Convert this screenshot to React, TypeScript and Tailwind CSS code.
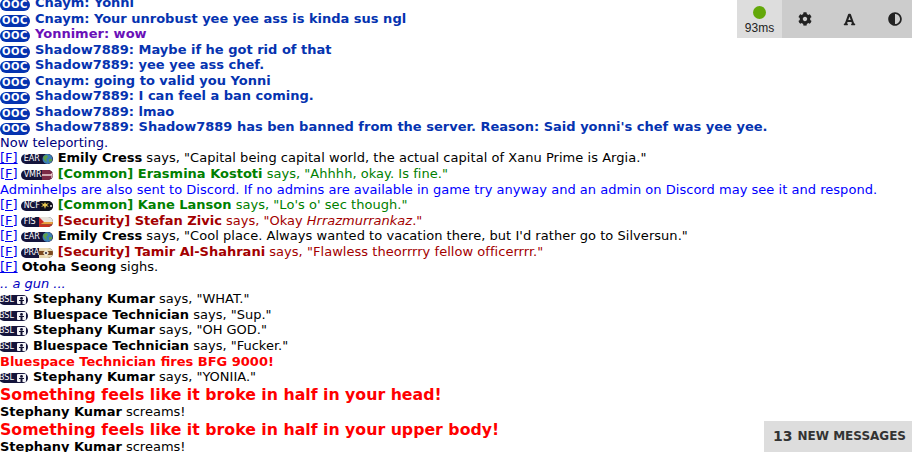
import React from 'react';
import { FaCog, FaFont, FaAdjust } from 'react-icons/fa';

const Ooc = () => (
  <span className="inline-flex items-center justify-center w-[30px] h-[12px] rounded-[6px] bg-[#0533b0] text-white text-[10px] leading-none font-bold mr-[5px] align-[-1px] tracking-[0.5px]">
    OOC
  </span>
);

const F = () => <span className="text-[#0000ee] underline">[F]</span>;

const Flag = ({ kind }: { kind: string }) => {
  if (kind === 'EAR') {
    return (
      <svg width="11" height="10" viewBox="0 0 11 10" className="block shrink-0">
        <circle cx="5.5" cy="5" r="5" fill="#3d7fb5" />
        <path d="M2 2l3-1 1 2-2 2 1 3-2-1-2-3z" fill="#5da04a" />
        <path d="M7 5l3 0 0 2-3 1z" fill="#5da04a" />
      </svg>
    );
  }
  if (kind === 'VMR') {
    return (
      <svg width="13" height="10" viewBox="0 0 13 10" className="block shrink-0">
        <rect width="13" height="10" fill="#7c2a45" />
        <path d="M0 5h9l3-3" stroke="#f0d8d8" strokeWidth="1.4" fill="none" />
        <path d="M10 5v3" stroke="#f0d8d8" strokeWidth="1.2" />
      </svg>
    );
  }
  if (kind === 'NCF') {
    return (
      <svg width="13" height="10" viewBox="0 0 13 10" className="block shrink-0">
        <rect width="13" height="10" fill="#10101c" />
        <path d="M1 2l2 2-2 2 3-1 1 3 1-3 3 1-2-2 2-2-3 1-1-2-1 2z" fill="#e8c850" />
        <circle cx="11" cy="5" r="1" fill="#e8e8e8" />
      </svg>
    );
  }
  if (kind === 'FIS') {
    return (
      <svg width="14" height="10" viewBox="0 0 14 10" className="block shrink-0">
        <rect width="14" height="5" fill="#e8e4dc" />
        <rect y="5" width="14" height="2.5" fill="#e8a040" />
        <rect y="7.5" width="14" height="2.5" fill="#c83020" />
        <path d="M0 0l5 5-5 3z" fill="#d02828" />
      </svg>
    );
  }
  if (kind === 'PRA') {
    return (
      <svg width="14" height="10" viewBox="0 0 14 10" className="block shrink-0">
        <rect width="14" height="10" fill="#e8d8b0" />
        <rect y="3" width="14" height="4" fill="#7c4a20" />
        <path d="M7 1l3 4-3 4-3-4z" fill="#f0e8d0" />
        <circle cx="7" cy="5" r="1" fill="#202040" />
      </svg>
    );
  }
  return (
    <svg width="12" height="10" viewBox="0 0 12 10" className="block shrink-0">
      <rect x="1" y="1" width="9" height="8" rx="1" fill="#f4f4f8" />
      <circle cx="5.5" cy="3.4" r="1.4" fill="#101030" />
      <path d="M3 5h5v1H6.5v3h-2V6H3z" fill="#101030" />
    </svg>
  );
};

const Badge = ({ kind, cut }: { kind: string; cut?: boolean }) => (
  <span
    className={`inline-flex items-center justify-between h-[10px] overflow-hidden bg-[#14143c] text-white text-[8px] leading-none font-normal align-[1px] rounded-[5px] ${
      cut ? 'w-[29px] -ml-[1px] mr-[5px]' : 'w-[32px] pl-[3px] ml-[3px] mr-[5px]'
    }`}
  >
    <span>{kind}</span>
    <Flag kind={kind} />
  </span>
);

const Line = ({ className, children }: { className?: string; children: React.ReactNode }) => (
  <div className={`h-[15.55px] whitespace-nowrap ${className ?? ''}`}>{children}</div>
);

const Big = ({ children }: { children: React.ReactNode }) => (
  <div className="h-[19.5px] whitespace-nowrap font-bold text-[#ff0000] text-[15.75px] leading-[19.5px]">{children}</div>
);

const ooc = [
  ['Cnaym: Yonni', 'text-[#0533b0]'],
  ['Cnaym: Your unrobust yee yee ass is kinda sus ngl', 'text-[#0533b0]'],
  ['Yonnimer: wow', 'text-[#6a10b8]'],
  ['Shadow7889: Maybe if he got rid of that', 'text-[#0533b0]'],
  ['Shadow7889: yee yee ass chef.', 'text-[#0533b0]'],
  ['Cnaym: going to valid you Yonni', 'text-[#0533b0]'],
  ['Shadow7889: I can feel a ban coming.', 'text-[#0533b0]'],
  ['Shadow7889: lmao', 'text-[#0533b0]'],
  ["Shadow7889: Shadow7889 has ben banned from the server. Reason: Said yonni's chef was yee yee.", 'text-[#0533b0]'],
];

const bsl = [
  ['Stephany Kumar', 'says, "WHAT."'],
  ['Bluespace Technician', 'says, "Sup."'],
  ['Stephany Kumar', 'says, "OH GOD."'],
  ['Bluespace Technician', 'says, "Fucker."'],
];

const Speech = ({
  kind,
  radio,
  name,
  text,
  color,
}: {
  kind: string;
  radio?: string;
  name: string;
  text: string;
  color?: string;
}) => (
  <Line className={color}>
    <F />
    <Badge kind={kind} />
    {radio && <b>{radio} </b>}
    <b>{name}</b> <span className="tracking-[0.04px]">{text}</span>
  </Line>
);

export default function App() {
  return (
    <div className="relative h-[452px] w-[912px] overflow-hidden bg-white text-black text-[13px] leading-[15.55px] font-['DejaVu_Sans',Verdana,sans-serif]">
      <div className="-mt-[5px]">
        {ooc.map(([t, c], i) => (
          <Line key={i} className={`font-bold ${c}`}>
            <Ooc />
            {t}
          </Line>
        ))}
        <Line className="text-[#000080]">Now teleporting.</Line>
        <Speech kind="EAR" name="Emily Cress" text='says, "Capital being capital world, the actual capital of Xanu Prime is Argia."' />
        <Speech kind="VMR" radio="[Common]" name="Erasmina Kostoti" text='says, "Ahhhh, okay. Is fine."' color="text-[#008000]" />
        <Line className="text-[#0000ff] tracking-[0.03px]">
          Adminhelps are also sent to Discord. If no admins are available in game try anyway and an admin on Discord may see it and respond.
        </Line>
        <Speech kind="NCF" radio="[Common]" name="Kane Lanson" text={'says, "Lo\'s o\' sec though."'} color="text-[#008000]" />
        <Line className="text-[#a30000]">
          <F />
          <Badge kind="FIS" />
          <b>[Security] Stefan Zivic</b> says, "Okay <i>Hrrazmurrankaz</i>."
        </Line>
        <Speech kind="EAR" name="Emily Cress" text={'says, "Cool place. Always wanted to vacation there, but I\'d rather go to Silversun."'} />
        <Speech kind="PRA" radio="[Security]" name="Tamir Al-Shahrani" text='says, "Flawless theorrrry fellow officerrrr."' color="text-[#a30000]" />
        <Line>
          <F /> <b>Otoha Seong</b> sighs.
        </Line>
        <Line className="italic text-[#0000c0] mt-[1px]">.. a gun ...</Line>
        {bsl.map(([n, t], i) => (
          <Line key={i}>
            <Badge kind="BSL" cut />
            <b>{n}</b> {t}
          </Line>
        ))}
        <Line className="font-bold text-[#ff0000]">Bluespace Technician fires BFG 9000!</Line>
        <Line>
          <Badge kind="BSL" cut />
          <b>Stephany Kumar</b> says, "YONIIA."
        </Line>
        <Big>Something feels like it broke in half in your head!</Big>
        <Line>
          <b>Stephany Kumar</b> screams!
        </Line>
        <Big>Something feels like it broke in half in your upper body!</Big>
        <Line>
          <b>Stephany Kumar</b> screams!
        </Line>
      </div>

      {/* toolbar runs a few px past the window edge, like the original */}
      <div className="absolute top-0 right-[-5px] flex h-[38px] bg-[#cccccc] text-[#222222]">
        <div className="flex w-[45px] flex-col items-center bg-[#dddddd] pt-[6px]">
          <span className="h-[13px] w-[13px] rounded-full bg-[#63a80a]" />
          <span className="mt-[2px] text-[12px] leading-[14px] font-['Liberation_Sans',Arial,sans-serif]">93ms</span>
        </div>
        <div className="flex w-[45px] items-center justify-center"><FaCog size={14} /></div>
        <div className="flex w-[45px] items-center justify-center"><FaFont size={13} /></div>
        <div className="flex w-[45px] items-center justify-center"><FaAdjust size={14} /></div>
      </div>

      <div className="absolute bottom-0 right-0 flex h-[31px] w-[148px] items-center bg-[#dddddd] pl-[9px] text-[12px] font-bold text-[#333333]">
        <span className="text-[14px] mr-[5px]">13</span>NEW MESSAGES
      </div>
    </div>
  );
}
